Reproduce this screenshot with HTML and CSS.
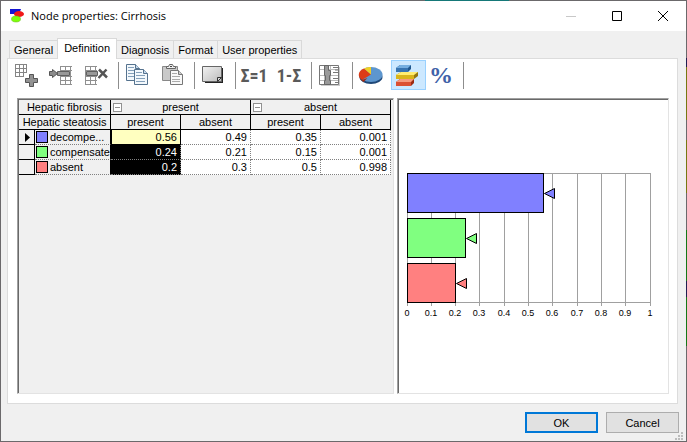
FILE: index.html
```html
<!DOCTYPE html>
<html lang="en">
<head>
<meta charset="utf-8">
<title>Node properties: Cirrhosis</title>
<link rel="stylesheet" href="styles.css">
</head>
<body>
<main class="window">
  <header class="titlebar">
    <svg class="app-icon" width="16" height="16" viewBox="0 0 16 16"><path d="M1 1h11l-2 5H1z" fill="#1414d2"/><ellipse cx="10" cy="6" rx="5" ry="3" fill="#f01818"/><ellipse cx="7" cy="11" rx="4.500" ry="3" fill="#7dff0a" stroke="#5fb80c" stroke-width=".5"/></svg>
    <h1>Node properties: Cirrhosis</h1>
    <div class="caption-buttons">
      <button type="button" disabled aria-label="Minimize"><svg width="12" height="12"><path d="M1 6.500h10" stroke="#c8c8c8"/></svg></button>
      <button type="button" aria-label="Maximize"><svg width="12" height="12"><path d="M1.500 1.500h9v9h-9z" stroke="#000" fill="none"/></svg></button>
      <button type="button" aria-label="Close"><svg width="12" height="12"><path d="M1 1l10 10M11 1L1 11" stroke="#000"/></svg></button>
    </div>
  </header>

  <nav class="tabs" role="tablist">
    <button type="button" role="tab">General</button>
    <button type="button" role="tab" class="selected" aria-selected="true">Definition</button>
    <button type="button" role="tab">Diagnosis</button>
    <button type="button" role="tab">Format</button>
    <button type="button" role="tab">User properties</button>
  </nav>

  <section class="page">
    <div class="toolbar" role="toolbar">
      <button type="button" aria-label="Add state"><svg viewBox="0 0 24 24"><path d="M1.500 1v13M5.500 1v13M9.500 1v13M12.500 1v8M1 1.500h12M1 5.500h12M1 9.500h12M1 13.500h9" stroke="#858585" fill="none"/><path d="M15.500 11.500h4v4h4v4h-4v4h-4v-4h-4v-4h4z" fill="#929292" stroke="#555"/></svg></button>
      <button type="button" aria-label="Insert state"><svg viewBox="0 0 24 24"><path d="M11.500 3v19M16.500 3v19M21.500 3v19M11 3.500h12M11 7.500h12M11 13.500h12M11 17.500h12M11 21.500h12" stroke="#909090" fill="none"/><path d="M8.500 8.500h12v4h-12z" fill="#999" stroke="#606060"/><path d="M.5 8.500h3v-2l5 4-5 4v-2h-3z" fill="#8c8c8c" stroke="#555"/></svg></button>
      <button type="button" aria-label="Delete state"><svg viewBox="0 0 24 24"><path d="M1.500 3v19M6.500 3v19M11.500 3v19M1 3.500h12M1 7.500h12M1 13.500h12M1 17.500h12M1 21.500h12" stroke="#909090" fill="none"/><path d="M2.500 8.500h11v4h-11z" fill="#999" stroke="#606060"/><path d="M15 6.500l8 8M22.500 6.500l-8 8.500" stroke="#555" stroke-width="2.500"/></svg></button>
      <span class="sep"></span>
      <button type="button" aria-label="Copy"><svg viewBox="0 0 24 24"><g fill="#f3f8fc" stroke="#55728e"><path d="M1.500 1.500h9l4 4v12h-13z"/><path d="M10.500 1.500v4h4" fill="#c5d8ea"/><path d="M3 4.500h6M3 7.500h8M3 10.500h8M3 13.500h8" stroke="#84a0ba"/><path d="M9.500 6.500h9l4 4v11h-13z"/><path d="M18.500 6.500v4h4" fill="#c5d8ea"/><path d="M11 9.500h6M11 12.500h9M11 15.500h9M11 18.500h9" stroke="#84a0ba"/></g></svg></button>
      <button type="button" aria-label="Paste"><svg viewBox="0 0 24 24"><path d="M2.500 3.500h15v14h-15z" fill="#c9c9c9" stroke="#888"/><path d="M6.500 5.500v-2h2l1-2h3l1 2h2v2z" fill="#eee" stroke="#666"/><path d="M10 3.500h2" stroke="#444"/><path d="M10.500 7.500h8l4 4v10h-12z" fill="#f8f8f8" stroke="#777"/><path d="M18.500 7.500v4h4" fill="#ccc" stroke="#777"/><path d="M12 10.500h5M12 13.500h8M12 16.500h8M12 18.500h8" stroke="#aaa"/></svg></button>
      <span class="sep"></span>
      <button type="button" aria-label="Annotation"><svg viewBox="0 0 24 24"><defs><linearGradient id="note" x1="0" y1="0" x2="1" y2="1"><stop offset="0" stop-color="#f2f2f2"/><stop offset="1" stop-color="#bcbcbc"/></linearGradient></defs><path d="M3 5h19v15H4z" fill="#222"/><path d="M1.500 3.500h19v15h-19z" fill="url(#note)" stroke="#666"/><path d="M20.500 14.500h-4v4z" fill="#ddd" stroke="#333"/></svg></button>
      <span class="sep"></span>
      <button type="button" aria-label="Normalize"><svg viewBox="0 0 24 24"><text class="sum" x="12" y="19">Σ=1</text></svg></button>
      <button type="button" aria-label="Complement"><svg viewBox="0 0 24 24"><text class="sum" x="12" y="19">1-Σ</text></svg></button>
      <span class="sep"></span>
      <button type="button" aria-label="Elicitation chart"><svg viewBox="0 0 24 24"><path d="M3 4h19v19H3z" fill="#ccc"/><path d="M1.500 2.500h19v19h-19z" fill="#fff" stroke="#777"/><path d="M2 6.500h18M2 12.500h18M2 17.500h18M6.500 3v18M12.500 3v18" stroke="#bbb"/><path d="M6.500 2.500h4v5h2v5h-1v5h1v4h-6v-4h1v-5h-1z" fill="#999" stroke="#666"/><path d="M15 4.500h5M15 9.500h5M15 15.500h5M17 7h3M17 19.500h3" stroke="#777"/></svg></button>
      <span class="sep"></span>
      <button type="button" aria-label="Pie chart"><svg viewBox="0 0 24 24"><ellipse cx="12" cy="14" rx="11.500" ry="7" fill="#1f4777"/><ellipse cx="12" cy="11.500" rx="11.500" ry="7.500" fill="#5d96ce"/><path d="M12 11.500L3 17A11.500 7.500 0 0 1 5 5.500z" fill="#dd3b16"/><path d="M3 17A11.500 7 0 0 1 .5 12v2q1 3 4 5l4-4z" fill="#a52b12"/><path d="M12 11.500L5 5.500Q8 3.500 12 4z" fill="#f0cf25"/></svg></button>
      <button type="button" aria-label="Bar chart" class="active" aria-pressed="true"><svg viewBox="0 0 24 24"><path d="M2 5l4-3h11v4l-3 3H2z" fill="#1f568d"/><path d="M2 5l4-3h11l-3 3z" fill="#75aee0"/><path d="M2 5h12v4H2z" fill="#3774b1"/><path d="M2 12l5-3h17v4l-4 3H2z" fill="#927713"/><path d="M2 12l5-3h17l-4 3z" fill="#ffed72"/><path d="M2 12h18v4H2z" fill="#d9b51c"/><path d="M2 19l4-3h14v4l-3 3H2z" fill="#9c2b13"/><path d="M2 19l4-3h14l-3 3z" fill="#f59a7e"/><path d="M2 19h15v4H2z" fill="#db5032"/></svg></button>
      <button type="button" aria-label="Percent"><svg viewBox="0 0 24 24"><text class="percent" x="12" y="20">%</text></svg></button>
      <span class="sep"></span>
    </div>

    <div class="panes">
      <div class="pane grid-pane">
        <table>
          <colgroup><col class="c-mark"><col class="c-name"><col><col><col><col></colgroup>
          <thead>
            <tr><th colspan="2">Hepatic fibrosis</th><th colspan="2" class="group"><button type="button" class="fold" aria-label="Collapse present"></button>present</th><th colspan="2" class="group"><button type="button" class="fold" aria-label="Collapse absent"></button>absent</th></tr>
            <tr><th colspan="2">Hepatic steatosis</th><th>present</th><th>absent</th><th>present</th><th>absent</th></tr>
          </thead>
          <tbody>
            <tr><td class="mark"><svg width="5" height="9"><path d="M0 0l5 4.500L0 9z"/></svg></td><th class="name"><i class="swatch blue"></i>decompe...</th><td class="current">0.56</td><td>0.49</td><td>0.35</td><td>0.001</td></tr>
            <tr><td class="mark"></td><th class="name"><i class="swatch green"></i>compensate</th><td class="picked">0.24</td><td>0.21</td><td>0.15</td><td>0.001</td></tr>
            <tr><td class="mark"></td><th class="name"><i class="swatch red"></i>absent</th><td class="picked">0.2</td><td>0.3</td><td>0.5</td><td>0.998</td></tr>
          </tbody>
        </table>
      </div>
      <div class="pane chart-pane">
        <svg class="chart" width="260" height="150" viewBox="0 0 260 150" role="img" aria-label="State probabilities">
          <path class="lines" d="M8.500 4v133M32.500 4v133M56.500 4v133M80.500 4v133M105.500 4v133M129.500 4v133M153.500 4v133M178.500 4v133M202.500 4v133M226.500 4v133M251.500 4v133M8 4.500h244M8 133.500h244"/>
          <g class="bars">
            <rect class="blue" x="8.500" y="4.500" width="136" height="39"/>
            <path class="blue" d="M145.500 24.500l10-5v10z"/>
            <rect class="green" x="8.500" y="49.500" width="58" height="39"/>
            <path class="green" d="M67.500 69.500l10-5v10z"/>
            <rect class="red" x="8.500" y="94.500" width="48" height="39"/>
            <path class="red" d="M57.500 114.500l10-5v10z"/>
          </g>
          <g class="scale"><text x="8" y="147">0</text><text x="32" y="147">0.1</text><text x="56" y="147">0.2</text><text x="80" y="147">0.3</text><text x="105" y="147">0.4</text><text x="129" y="147">0.5</text><text x="153" y="147">0.6</text><text x="178" y="147">0.7</text><text x="202" y="147">0.8</text><text x="226" y="147">0.9</text><text x="251" y="147">1</text></g>
        </svg>
      </div>
    </div>
  </section>

  <footer class="actions">
    <button type="button" class="default">OK</button>
    <button type="button">Cancel</button>
    <svg class="grip" width="8" height="8"><path d="M6 0h2v2H6zM3 3h2v2H3zM6 3h2v2H6zM0 6h2v2H0zM3 6h2v2H3zM6 6h2v2H6z" fill="#bcbcbc"/></svg>
  </footer>
</main>
</body>
</html>
```
FILE: styles.css
```css
* { box-sizing: border-box; }

body {
  margin: 0;
  padding: 1px;
  min-height: 100vh;
  display: flex;
  background:
    linear-gradient(#6b696b 58px, #201c50 58px 67px, #77770f 67px 120px, #6b696b 120px 140px, #77770f 140px 193px, #6b696b 193px 230px, #157815 230px 281px, #201c50 281px 297px, #157815 297px 346px, #6b696b 346px) right / 1px 100% no-repeat,
    linear-gradient(90deg, #6b696b 425px, #157878 425px 509px, #6b696b 509px) top / 100% 1px no-repeat,
    #6b696b;
  font: 11px/14px "Liberation Sans", Arial, sans-serif;
  color: #000;
}

button { font: inherit; color: inherit; margin: 0; padding: 0; border: 0; background: none; }

.window { flex: 1; display: flex; flex-direction: column; background: #f0f0f0; position: relative; }

.titlebar { height: 30px; display: flex; align-items: center; padding-left: 8px; background: #fff; }
.titlebar h1 { flex: 1; margin: 0 0 0 6px; font: 11px/16px "Open Sans", "Noto Sans", sans-serif; }
.caption-buttons { display: flex; }
.caption-buttons button { width: 46px; height: 30px; display: grid; place-items: center; }

.tabs { display: flex; align-items: flex-end; height: 27px; padding-left: 8px; }
.tabs button { height: 18px; padding: 0 4px; border: 1px solid #d9d9d9; border-width: 1px 1px 0 0; background: #f0f0f0; }
.tabs button:first-child { border-left-width: 1px; border-right-width: 0; }
.tabs .selected { height: 21px; margin-bottom: -1px; padding: 0 6px 2px; border-left-width: 1px; background: #fff; z-index: 1; }

.page { flex: 1; display: flex; flex-direction: column; margin: 0 8px 0 6px; padding: 1px 8px 9px 9px; border: 1px solid #dcdcdc; background: #fff; }

.toolbar { display: flex; height: 30px; margin-left: -6px; }
.toolbar button { width: 35px; padding: 3px 0 0 3px; display: flex; }
.toolbar .active { padding: 2px 0 0 2px; border: 1px solid #99d1ff; background: #cce8ff; }
.toolbar svg { width: 24px; height: 24px; overflow: visible; }
.sep { width: 1px; height: 27px; margin: 2px 3px 0 2px; background: #8d8d8d; }
.sum { font: bold 18px "Liberation Sans Narrow", "Roboto Condensed", "Liberation Sans", sans-serif; fill: #5a5a5a; text-anchor: middle; }
.percent { font: bold 24px "Liberation Serif", serif; fill: #3f62a8; text-anchor: middle; }

.panes { flex: 1; display: flex; gap: 3px; margin-top: 8px; }
.pane { border: 1px solid; border-color: #a0a0a0 #e3e3e3 #e3e3e3 #a0a0a0; box-shadow: inset 1px 1px #696969; padding: 1px 0 0 1px; }
.grid-pane { flex: 377; background: #f0f0f0; }
.chart-pane { flex: 272; display: flex; align-items: center; padding-bottom: 6px; background: #fff; }

table { width: 372px; table-layout: fixed; border-collapse: separate; border-spacing: 0; }
.c-mark { width: 16px; }
.c-name { width: 76px; }
th, td { height: 15px; padding: 0; font-weight: normal; line-height: 14px; }
thead th { border: 1px solid #000; border-width: 0 1px 1px 0; text-align: center; }
.group { position: relative; }
.fold { position: absolute; left: 2px; top: 3px; width: 9px; height: 9px; border: 1px solid #919191; background: linear-gradient(#919191, #919191) center / 5px 1px no-repeat #fff; }
td { padding-right: 3px; border: 1px dotted #808080; border-width: 0 1px 1px 0; background: #fff; text-align: right; }
.mark { padding: 0 0 0 6px; border: 1px solid #000; border-width: 0 1px 1px 0; background: #f0f0f0; text-align: left; }
.mark svg, .swatch { display: block; }
.name { display: flex; align-items: center; gap: 2px; padding-left: 1px; border-right: 1px solid #000; border-bottom: 1px dotted #808080; white-space: nowrap; }
.swatch { flex: none; width: 12px; height: 12px; border: 1px solid #000; }
.current { background: #ffffc0; border: 1px solid #000; border-top-width: 0; }
.picked { background: #000; color: #fff; }

.swatch.blue { background: #8080ff; }
.swatch.green { background: #80ff80; }
.swatch.red { background: #ff8080; }

.lines { stroke: #a0a0a0; fill: none; }
.bars { stroke: #000; }
.bars .blue { fill: #8080ff; }
.bars .green { fill: #80ff80; }
.bars .red { fill: #ff8080; }
.scale { font-size: 9px; text-anchor: middle; }

.actions { display: flex; justify-content: flex-end; gap: 8px; padding: 8px 7px 8px; }
.actions button { width: 73px; height: 21px; border: 1px solid #adadad; background: #e1e1e1; }
.actions .default { border: 2px solid #0078d7; }
.grip { position: absolute; right: 3px; bottom: 1px; }
```
